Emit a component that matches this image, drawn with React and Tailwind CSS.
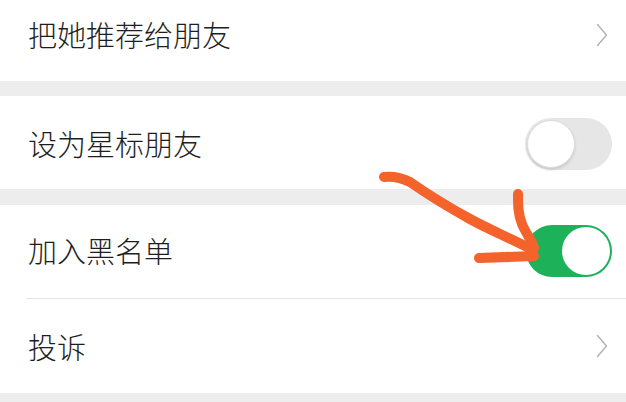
import React from 'react';

const Chevron = () => (
  <svg width="12" height="24" viewBox="0 0 12 24" fill="none" className="shrink-0">
    <path d="M1.5 1.5 L10.5 12 L1.5 22.5" stroke="#b4b4b4" strokeWidth="1.5" strokeLinecap="round" strokeLinejoin="round" />
  </svg>
);

const Toggle = ({ on }) =>
  on ? (
    <div className="w-[86px] h-[52px] rounded-full bg-[#1db25a] flex items-center justify-end p-[2px]">
      <div className="w-[48px] h-[48px] rounded-full bg-white" />
    </div>
  ) : (
    <div className="w-[87px] h-[52px] rounded-full bg-[#e6e6e6] flex items-center p-[2px]">
      <div className="w-[48px] h-[48px] rounded-full bg-white border border-[#dcdcdc] shadow-[0_2px_3px_rgba(0,0,0,0.12)]" />
    </div>
  );

const Row = ({ label, right, className = '' }) => (
  <div className={`flex items-center justify-between pl-[28px] pr-[14px] bg-white ${className}`}>
    <span className="text-[29px] leading-none font-light text-[#1e1e1e]">{label}</span>
    {right}
  </div>
);

export default function App() {
  return (
    <div
      className="relative w-[626px] h-[402px] overflow-hidden bg-[#ededed]"
      style={{ fontFamily: '"Noto Sans CJK SC", "Noto Sans", sans-serif' }}
    >
      <Row label="把她推荐给朋友" right={<Chevron />} className="h-[81px] pb-[12px] pr-[18px]" />
      <div className="h-[15px]" />
      <Row label="设为星标朋友" right={<Toggle />} className="h-[93px] pt-[2px]" />
      <div className="h-[16px]" />
      <div className="bg-white">
        <Row label="加入黑名单" right={<Toggle on />} className="h-[93px] pb-[2px]" />
        <div className="ml-[26px] h-px bg-[#e3e3e3]" />
        <Row label="投诉" right={<Chevron />} className="h-[94px] pr-[18px]" />
      </div>

      <svg className="absolute left-0 top-0 pointer-events-none" width="626" height="402" viewBox="0 0 626 402" fill="none">
        <g stroke="#f4632c" strokeWidth="10" strokeLinecap="round" strokeLinejoin="round">
          <path d="M384 177 C394 176 402 178 410 182 C430 196 450 208 470 219 C490 230 510 238 533 250" />
          <path d="M518 194 C518 205 518 214 522 224 C526 234 532 240 534 248" />
          <path d="M479 258 L534 256" />
        </g>
      </svg>
    </div>
  );
}
